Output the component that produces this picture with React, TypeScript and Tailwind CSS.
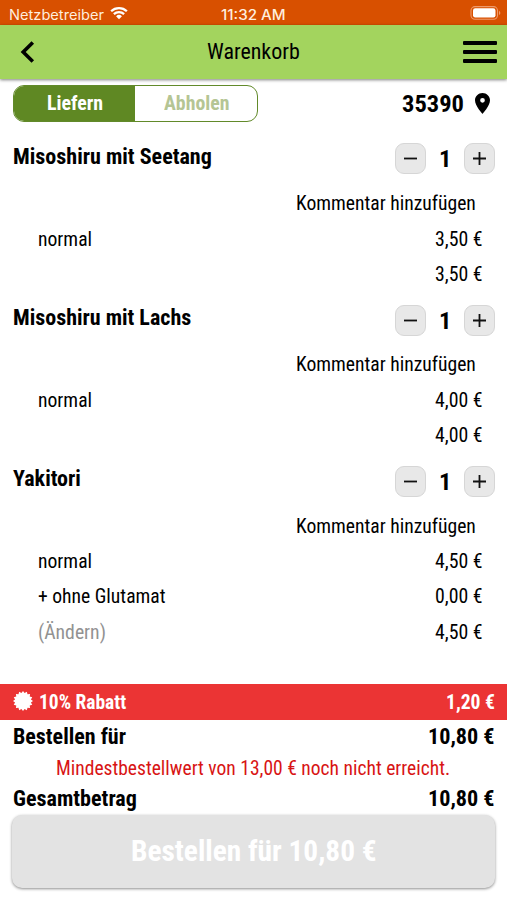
import { useLayoutEffect, useRef, useState } from "react";
import { clsx } from "clsx";

/** Text set to a given width, condensed horizontally as needed. */
function Fit({ w, className, children }: { w: number; className?: string; children: string }) {
  const ref = useRef<HTMLSpanElement>(null);
  const [scale, setScale] = useState(1);
  useLayoutEffect(() => {
    const measure = () => {
      if (ref.current && ref.current.offsetWidth) {
        setScale(w / ref.current.offsetWidth);
      }
    };
    measure();
    document.fonts?.ready.then(measure);
  }, [w]);
  return (
    <span className={clsx("block shrink-0 text-left whitespace-nowrap", className)} style={{ width: w }}>
      <span ref={ref} className="inline-block origin-left align-top" style={{ transform: `scaleX(${scale})` }}>
        {children}
      </span>
    </span>
  );
}

type Line = { label?: string; labelWidth?: number; muted?: boolean; price: string };
type Item = { name: string; width: number; lines: Line[] };

const items: Item[] = [
  {
    name: "Misoshiru mit Seetang",
    width: 198.5,
    lines: [{ label: "normal", labelWidth: 54, price: "3,50 €" }, { price: "3,50 €" }],
  },
  {
    name: "Misoshiru mit Lachs",
    width: 178,
    lines: [{ label: "normal", labelWidth: 54, price: "4,00 €" }, { price: "4,00 €" }],
  },
  {
    name: "Yakitori",
    width: 68,
    lines: [
      { label: "normal", labelWidth: 54, price: "4,50 €" },
      { label: "+ ohne Glutamat", labelWidth: 127.5, price: "0,00 €" },
      { label: "(Ändern)", labelWidth: 68, muted: true, price: "4,50 €" },
    ],
  },
];

function StepButton({ plus }: { plus?: boolean }) {
  return (
    <button className="flex size-[31px] items-center justify-center rounded-[9px] border border-[#d6d6d6] bg-[#e8e8e8]">
      <svg width="15" height="15" viewBox="0 0 15 15" stroke="#111" strokeWidth="1.8">
        <path d={plus ? "M1 7.5H14M7.5 1V14" : "M1 7.5H14"} />
      </svg>
    </button>
  );
}

function CartItem({ item }: { item: Item }) {
  return (
    <section>
      <div className="flex h-[55px] justify-between pr-3 pl-[13px]">
        <Fit w={item.width} className="pt-[11.4px] text-[22px] leading-[30px] font-bold">
          {item.name}
        </Fit>
        <div className="flex h-[31px] items-center pt-[25.6px]">
          <StepButton />
          <Fit w={12} className="mx-[13px] text-[24.5px] leading-[31px] font-bold">1</Fit>
          <StepButton plus />
        </div>
      </div>
      <div className="flex h-[35.4px] items-center justify-end pr-[31.5px]">
        <Fit w={179.5} className="text-[20px]">Kommentar hinzufügen</Fit>
      </div>
      {item.lines.map((line, i) => (
        <div key={i} className="flex h-[35.4px] items-center pr-[24.5px] pl-[37.6px] text-[20px]">
          {line.label && (
            <Fit w={line.labelWidth ?? 0} className={line.muted ? "text-[#929292]" : ""}>
              {line.label}
            </Fit>
          )}
          <Fit w={47.5} className="ml-auto">{line.price}</Fit>
        </div>
      ))}
    </section>
  );
}

function Seal() {
  const points = Array.from({ length: 32 }, (_, i) => {
    const r = i % 2 ? 8.1 : 10;
    const a = (i * Math.PI) / 16;
    return `${(10 + r * Math.sin(a)).toFixed(2)},${(10 - r * Math.cos(a)).toFixed(2)}`;
  }).join(" ");
  return (
    <svg className="-mt-[2px]" width="20" height="20" viewBox="0 0 20 20" fill="white">
      <polygon points={points} />
    </svg>
  );
}

export default function App() {
  return (
    <div className="flex h-[900px] w-[507px] flex-col overflow-hidden bg-white font-['Roboto_Condensed',Roboto,sans-serif] text-black [font-stretch:75%]">
      <div className="grid h-[25px] shrink-0 grid-cols-3 items-center bg-[#d85000] pt-[3px] font-[Inter,sans-serif] text-[14px] text-[#ffeede] [font-stretch:100%]">
        <div className="flex items-center gap-[6px] pl-[9px]">
          <Fit w={95}>Netzbetreiber</Fit>
          <svg className="-mt-[2px]" width="18" height="14" viewBox="0 0 19 14" fill="none" stroke="white" strokeWidth="2.4">
            <path d="M1.2 5.1a12 12 0 0 1 16.6 0M4.1 8.2a7.8 7.8 0 0 1 10.8 0" />
            <path d="M9.5 13.6 6.4 10.5a4.4 4.4 0 0 1 6.2 0z" fill="white" stroke="none" />
          </svg>
        </div>
        <div className="flex justify-center">
          <Fit w={65} className="font-medium">11:32 AM</Fit>
        </div>
        <div className="flex justify-end pr-[6px]">
          <svg className="-mt-[2px]" width="31" height="14" viewBox="0 0 31 14">
            <rect x="1" y="0.6" width="26.5" height="12.6" rx="4" fill="none" stroke="#ee9a6b" strokeWidth="1.1" />
            <rect x="3" y="2.3" width="22.5" height="9.2" rx="2.2" fill="white" />
            <path d="M29 4.7c1.8.7 1.8 3.7 0 4.4z" fill="#ee9a6b" />
          </svg>
        </div>
      </div>

      <header className="z-10 grid h-[54px] shrink-0 grid-cols-[1fr_auto_1fr] items-center bg-[#a3d45e] shadow-[0_1px_3px_rgba(0,0,0,0.5)]">
        <svg className="ml-[20px]" width="15" height="22" viewBox="0 0 15 22" fill="none" stroke="black" strokeWidth="3.6">
          <path d="M12.8 1.5 3.2 11l9.6 9.5" />
        </svg>
        <Fit w={93} className="text-[21.5px]">Warenkorb</Fit>
        <div className="mr-[10.5px] flex w-[33.5px] flex-col gap-[5.5px] justify-self-end">
          <span className="h-[3.7px] rounded-[1px] bg-black" />
          <span className="h-[3.7px] rounded-[1px] bg-black" />
          <span className="h-[3.7px] rounded-[1px] bg-black" />
        </div>
      </header>

      <div className="flex h-[51.6px] shrink-0 items-start justify-between pt-[6px] pr-[17px] pl-[13px]">
        <div className="flex h-[37px] w-[245px] overflow-hidden rounded-[11px] border border-[#628a2a] text-[19.5px] font-bold">
          <div className="flex w-[121px] items-center justify-center bg-[#5f8823] text-white">
            <Fit w={56}>Liefern</Fit>
          </div>
          <div className="flex flex-1 items-center justify-center text-[#b5c594]">
            <Fit w={65}>Abholen</Fit>
          </div>
        </div>
        <div className="flex h-[37px] items-center gap-[11px]">
          <Fit w={62} className="pt-px text-[24.5px] font-bold">35390</Fit>
          <svg className="-mt-px" width="15" height="21" viewBox="5 2 14 20" preserveAspectRatio="none">
            <path d="M12 2C8.13 2 5 5.13 5 9c0 5.25 7 13 7 13s7-7.75 7-13c0-3.87-3.13-7-7-7zm0 9.2a2.2 2.2 0 1 1 0-4.4 2.2 2.2 0 0 1 0 4.4z" />
          </svg>
        </div>
      </div>

      <main className="flex-1">
        {items.map((item) => (
          <CartItem key={item.name} item={item} />
        ))}
      </main>

      <footer className="flex h-[216px] shrink-0 flex-col">
        <div className="flex h-[36px] items-center bg-[#eb3434] pr-[12.5px] pl-[13px] text-[20px] font-bold text-white">
          <Seal />
          <Fit w={87.5} className="ml-[6px]">10% Rabatt</Fit>
          <Fit w={49} className="ml-auto">1,20 €</Fit>
        </div>
        <div className="flex h-[33px] items-center justify-between pr-[12.5px] pl-[13px] text-[22px] font-bold">
          <Fit w={113}>Bestellen für</Fit>
          <Fit w={66.5}>10,80 €</Fit>
        </div>
        <div className="flex h-[29px] items-center justify-center text-[20px] text-[#d81414]">
          <Fit w={394.5}>Mindestbestellwert von 13,00 € noch nicht erreicht.</Fit>
        </div>
        <div className="flex h-[33px] items-center justify-between pr-[12.5px] pl-[13px] text-[22px] font-bold">
          <Fit w={123.5}>Gesamtbetrag</Fit>
          <Fit w={66.5}>10,80 €</Fit>
        </div>
        <button className="mr-[12px] ml-[12px] flex h-[73px] items-center justify-center rounded-[10px] bg-[#e3e3e3] text-[29px] font-bold text-white shadow-[0_1px_3px_rgba(0,0,0,0.45)]">
          <Fit w={246}>Bestellen für 10,80 €</Fit>
        </button>
      </footer>
    </div>
  );
}
